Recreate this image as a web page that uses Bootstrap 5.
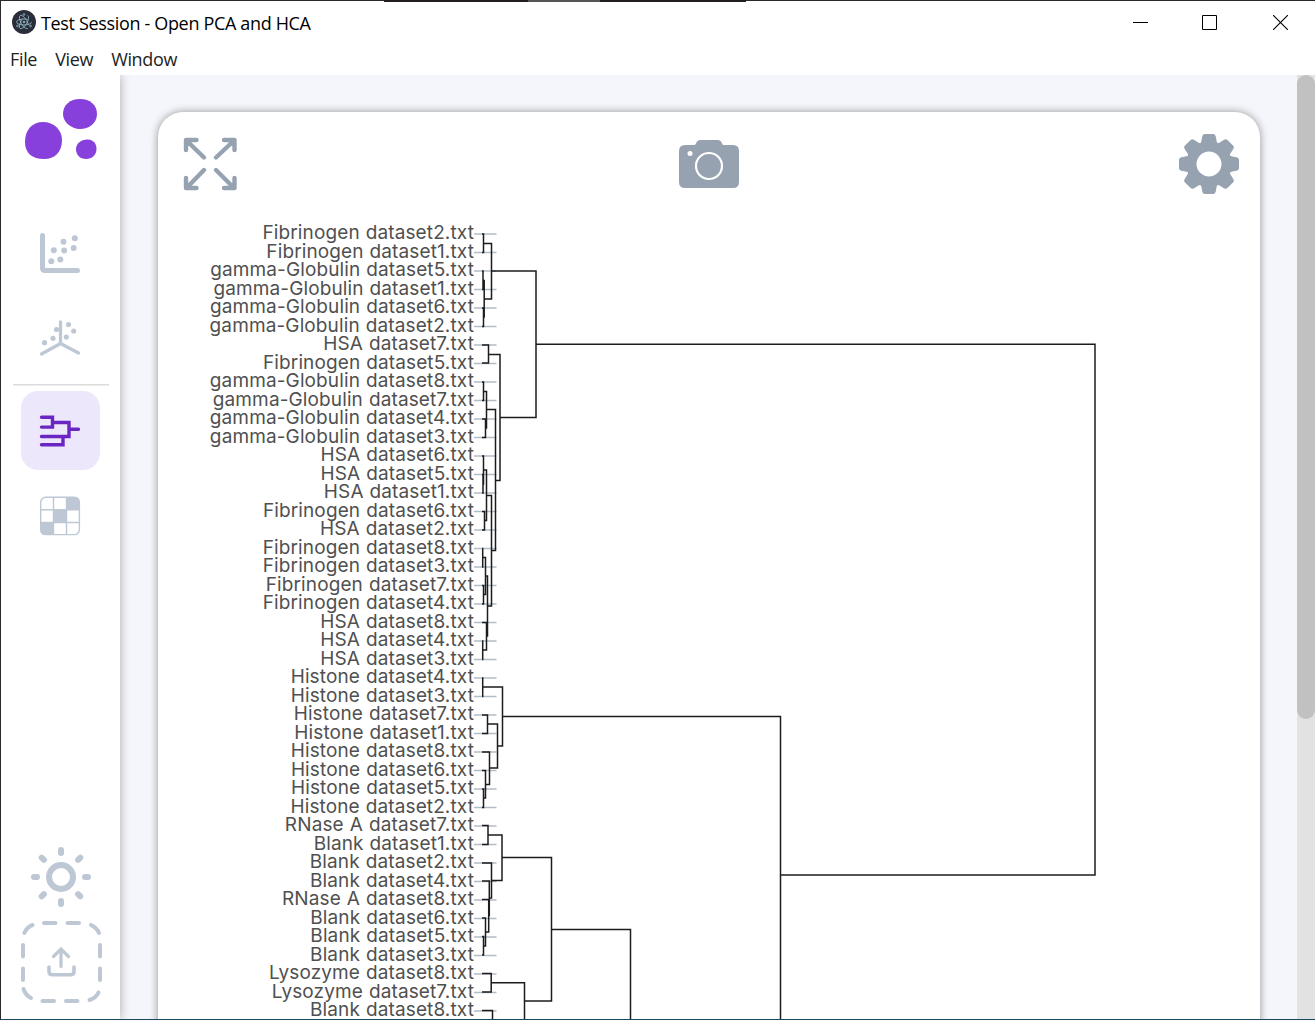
<!DOCTYPE html>
<html lang="en">
<head>
<meta charset="utf-8">
<meta name="viewport" content="width=device-width, initial-scale=1">
<title>Test Session - Open PCA and HCA</title>
<link href="https://cdn.jsdelivr.net/npm/bootstrap@5.3.0/dist/css/bootstrap.min.css" rel="stylesheet">
<style>
html,body{height:100%;overflow:hidden}
.app-window{height:100vh;border-left:1px solid #2b292b;border-top:1px solid #2b292b;border-bottom:1px solid #1d475c;position:relative;background:#fff}
.top-strip{position:absolute;left:383px;top:-1px;width:362px;height:2px;background:linear-gradient(90deg,#231f20 0 144px,#555 144px 216px,#231f20 216px)}
.title-row{height:44px;padding-left:11px}
.title-row>svg{margin-bottom:2px}
.title-text{font:18px/24px "Open Sans",sans-serif;color:#000;letter-spacing:-.34px;margin-left:5px}
.menu-row{height:30px;padding-left:9px;gap:18px;font:18px/28px "Open Sans",sans-serif;color:#222}
.menu-row span{display:inline-block;letter-spacing:-.34px}
.win-controls{gap:54px;margin-right:27px}
.win-controls svg{margin-bottom:2px}
.win-controls svg:last-child{margin-left:2px}
.side-panel{width:119px;z-index:2;background:#fff;box-shadow:0 0 10px rgba(0,0,0,.32);clip-path:inset(0 -20px 0 0);padding-left:12px}
.side-panel svg{display:block}
.tool-active{width:79px;height:79px;border-radius:17px;background:#ede7fb;margin:5px 0 0 8px}
.main-area{background:#f5f6fb;padding:37px 37px 0 38px;overflow:hidden}
.plot-card{height:1100px;background:#fff;border-radius:25px;box-shadow:0 0 8px rgba(0,0,0,.4)}
.plot-tools{height:112px;padding:22px 21px 0 23.5px}
.plot-tools svg:nth-child(2){margin-left:2px}
.label-list{width:316px;font:19px/18.5px Inter,sans-serif;color:#505050;letter-spacing:.12px;word-spacing:.5px;text-align:right}
.label-list li{height:18.5px;white-space:nowrap}
.scroll-track{width:18px;background:#e2e2e2}
.scroll-thumb{height:644px;border-radius:9px;background:#c1c1c1}
</style>
</head>
<body>
<div class="app-window d-flex flex-column">
  <div class="top-strip"></div>
  <header>
    <div class="title-row d-flex align-items-center">
      <svg width="24" height="24" viewBox="0 0 24 24" fill="none" stroke="#9fd0da" stroke-width=".7"><circle cx="12" cy="12" r="12" fill="#2b2e3a" stroke="none"/><ellipse cx="12" cy="12" rx="7.500" ry="3" transform="rotate(60 12 12)" stroke-dasharray="30 6"/><ellipse cx="12" cy="12" rx="7.500" ry="3" transform="rotate(-60 12 12)" stroke-dasharray="28 6"/><ellipse cx="12" cy="12" rx="7.500" ry="3" stroke-dasharray="29 7"/><circle cx="12" cy="12" r=".8" fill="#9fd0da"/><g fill="#2b2e3a"><circle cx="12" cy="4.500" r=".9"/><circle cx="5.500" cy="16" r=".9"/><circle cx="18.500" cy="16" r=".9"/></g></svg>
      <span class="title-text">Test Session - Open PCA and HCA</span>
      <div class="win-controls d-flex align-items-center ms-auto">
        <svg width="15" height="15"><path d="M0 7.500h15" stroke="#000"/></svg>
        <svg width="15" height="15"><path d="M.5.5h14v14h-14z" fill="none" stroke="#000"/></svg>
        <svg width="15" height="15"><path d="M0 0l15 15M15 0L0 15" stroke="#000" stroke-width="1.100"/></svg>
      </div>
    </div>
    <nav class="menu-row d-flex"><span>File</span><span>View</span><span>Window</span></nav>
  </header>
  <div class="d-flex flex-grow-1 overflow-hidden">
    <aside class="side-panel d-flex flex-column flex-shrink-0">
      <svg class="flex-shrink-0" width="96" height="311" viewBox="13 75 96 311">
        <g fill="#8840dc"><path d="M63 114C63 105 70 99 80 99S97 105 97 114S89 129 80 129S63 122 63 114Z"/><path d="M25 142C25 130 32 122 43 122C54 122 62 130 62 140C62 152 55 159 44 159C32 159 25 153 25 142Z"/><path d="M76 149C76 143 82 139 88 139.500C94 140 96.500 144 96.500 149C96.500 155 92 159 86 159C80 159 76 155 76 149Z"/></g>
        <g stroke="#bec8d5" fill="none" stroke-linecap="round" stroke-linejoin="round"><path stroke-width="5" d="M42.500 235.500V268Q42.500 270.500 45 270.500H77.500"/><path stroke-width="3.300" d="M60.500 322V343.500L41.500 354M60.500 343.500L78.500 353"/></g>
        <g fill="#bec8d5"><circle cx="74.800" cy="238.300" r="3"/><circle cx="63.500" cy="241.800" r="3"/><circle cx="73.700" cy="248" r="3"/><circle cx="53.800" cy="250.300" r="3"/><circle cx="64.200" cy="250.500" r="3"/><circle cx="51.300" cy="261.300" r="3"/><circle cx="60.300" cy="259.500" r="3"/><circle cx="68.500" cy="324.500" r="2.600"/><circle cx="56.500" cy="329.500" r="2.600"/><circle cx="73.700" cy="331" r="2.600"/><circle cx="66.300" cy="337" r="2.600"/><circle cx="53" cy="338.300" r="2.600"/><circle cx="44.500" cy="342.700" r="2.600"/></g>
        <path d="M13 384.700h96" stroke="#dcdcdc" stroke-width="1.600"/>
      </svg>
      <button class="tool-active btn p-0 border-0 flex-shrink-0" type="button" aria-label="Dendrogram">
        <svg width="79" height="79" viewBox="21 391 79 79" fill="none" stroke="#6a26c3" stroke-width="3.400" stroke-linecap="round"><path d="M41.500 417.200H52.500V427.100H41.500M52.500 422.500H69V436.500H41.500M69 429.300H78.500M63 436.500V444.700H41.500"/></svg>
      </button>
      <svg class="mt-4" width="96" height="46" viewBox="13 494 96 46"><rect x="40.700" y="497.200" width="38.700" height="37.400" rx="5" fill="#fff" stroke="#bec8d5" stroke-width="1.400"/><g fill="#bec8d5"><path d="M66.500 497H75Q79.500 497 79.500 502V510H66.500ZM53.500 510H66.500V522.500H53.500ZM40.500 522.500H53.500V535H45Q40.500 535 40.500 530Z"/></g><path d="M53.500 497v38M66.500 497v38M40.500 509.700h39M40.500 522.500h39" stroke="#bec8d5" stroke-width="1.400"/></svg>
      <svg class="mt-auto" width="96" height="179" viewBox="13 840 96 179" fill="none" stroke="#bec8d5" stroke-linecap="round">
        <circle cx="61" cy="877" r="12" stroke-width="6"/>
        <path stroke-width="6" d="M61 850v3M61 901v3M34 877h3M85 877h3M41.700 857.700l2.200 2.200M78.100 894.100l2.200 2.200M41.700 896.300l2.200-2.200M78.100 859.900l2.200-2.200"/>
        <path stroke-width="4" d="M44 923H55.500M67.500 923H79M91 925Q97 928 99 933M100 945V956.500M100 968.500V980M98.500 992.500Q96 998 89.500 1000M77.500 1001H66M54 1001H42.500M31 998Q25.500 995 23.500 989M23 980V968.500M23 956.500V945M24.300 933Q27 927 32.500 925"/>
        <path stroke-width="3.600" d="M49 967V971.500Q49 974.700 52.500 974.700H70.500Q74 974.700 74 971.500V967"/><path stroke-width="3.200" d="M61 966.500V949.500M53.500 956.500L61 949L68.500 956.500"/>
      </svg>
    </aside>
    <main class="main-area flex-grow-1">
      <section class="plot-card">
        <div class="plot-tools d-flex justify-content-between align-items-start">
          <svg width="56" height="58" viewBox="182 134 56 58" fill="none" stroke="#97a2b1" stroke-width="4.400" stroke-linecap="round" stroke-linejoin="round"><path d="M204 157.500L186.500 140.500M186 150V140H196.500M216 157.500L234 140.500M224 140H234.500V150M204 170L186.500 188M186 178V188H196.500M216 170L234 188M224 188H234.500V178"/></svg>
          <svg width="60" height="58" viewBox="679 134 60 58"><path fill="#97a2b1" d="M685 145H695L697 141.500Q698 140 700 140H718Q720 140 721 141.500L723 145H733Q739 145 739 151V182Q739 188 733 188H685Q679 188 679 182V151Q679 145 685 145Z"/><circle cx="709" cy="166" r="13" fill="none" stroke="#fff" stroke-width="2.200"/><circle cx="690" cy="153.500" r="2.500" fill="#fff"/></svg>
          <svg width="60" height="60" viewBox="-30 -30 60 60" fill="#97a2b1"><circle r="17.500" fill="none" stroke="#97a2b1" stroke-width="10"/><defs><path id="tooth" d="M-9-20Q-7.500-22-7-26Q-6.700-30-4-30H4Q6.700-30 7-26Q7.500-22 9-20Z"/></defs><use href="#tooth"/><use href="#tooth" transform="rotate(45)"/><use href="#tooth" transform="rotate(90)"/><use href="#tooth" transform="rotate(135)"/><use href="#tooth" transform="rotate(180)"/><use href="#tooth" transform="rotate(225)"/><use href="#tooth" transform="rotate(270)"/><use href="#tooth" transform="rotate(315)"/></svg>
        </div>
        <div class="d-flex">
          <ul class="label-list list-unstyled mb-0 flex-shrink-0">
            <li>Fibrinogen dataset2.txt</li><li>Fibrinogen dataset1.txt</li><li>gamma-Globulin dataset5.txt</li><li>gamma-Globulin dataset1.txt</li><li>gamma-Globulin dataset6.txt</li><li>gamma-Globulin dataset2.txt</li>
            <li>HSA dataset7.txt</li><li>Fibrinogen dataset5.txt</li><li>gamma-Globulin dataset8.txt</li><li>gamma-Globulin dataset7.txt</li><li>gamma-Globulin dataset4.txt</li><li>gamma-Globulin dataset3.txt</li>
            <li>HSA dataset6.txt</li><li>HSA dataset5.txt</li><li>HSA dataset1.txt</li><li>Fibrinogen dataset6.txt</li><li>HSA dataset2.txt</li><li>Fibrinogen dataset8.txt</li>
            <li>Fibrinogen dataset3.txt</li><li>Fibrinogen dataset7.txt</li><li>Fibrinogen dataset4.txt</li><li>HSA dataset8.txt</li><li>HSA dataset4.txt</li><li>HSA dataset3.txt</li>
            <li>Histone dataset4.txt</li><li>Histone dataset3.txt</li><li>Histone dataset7.txt</li><li>Histone dataset1.txt</li><li>Histone dataset8.txt</li><li>Histone dataset6.txt</li><li>Histone dataset5.txt</li><li>Histone dataset2.txt</li>
            <li>RNase A dataset7.txt</li><li>Blank dataset1.txt</li><li>Blank dataset2.txt</li><li>Blank dataset4.txt</li><li>RNase A dataset8.txt</li><li>Blank dataset6.txt</li><li>Blank dataset5.txt</li><li>Blank dataset3.txt</li>
            <li>Lysozyme dataset8.txt</li><li>Lysozyme dataset7.txt</li><li>Blank dataset8.txt</li>
          </ul>
          <svg class="flex-shrink-0" width="780" height="796" viewBox="474 224 780 796" fill="none">
            <path id="ticks" stroke="#b4bcc4" stroke-width="1.300"/>
            <path stroke="#1c1c1c" stroke-width="1.500" d="M482 234H483.500V252.500H482M483.500 243.500H491.500V299H484
              M482 271H483V289.500H482M483 280.500H484.200V317H483.500M482 308H483.500V326.500H482M491.500 271H536V417.500H500M536 344.300H1095V875H780.500
              M482 345H488.500V363H482M488.500 354.500H500V480.500H495.500M482 382H483.500V400.500H482M483.500 391.500H486.500V428H485.500M482 419H485.500V437.500H482M486.500 409.500H495.500V550.500H491.500
              M482 456H483.500V484H483M482 474.500H483V493H482M483.500 470H486.500V520.500H484.500M482 511.500H484.500V530H482M486.500 495.500H491.500V606H487.500
              M482 548.500H482.700V567H482M482.700 557.500H485.500V594.500H483.500M482 585.500H483.500V604H482M485.500 576H487.500V636H486.500
              M482 622.500H486.500V650H482.700M482 641H482.700V659.500H482
              M482 678H482.700V696.500H482M482.700 687H502.500V746H497.500M482 715H487.500V733.500H482M487.500 724H497.500V768H489.500M482 752H489.500V784.500H485.500M482 770.500H485.500V798H483.500M482 789H483.500V807.500H482M502.500 716.500H780.500V1022
              M482 825.500H488V844.500H482M488 835H502V880.500H491.500M482 863H491.500V898H489.500M482 881H489.300V915.500H488.500M482 899.500H488.700V932H485.500M482 918H485.500V946H483.500M482 936.500H483.500V955H482M502 857.500H551.500V1001H524.500M551.500 929.500H630.500V1022
              M482 973.500H491.200V992H482M491.200 982.700H524.500V1022M482 1010.500H492.500V1022"/>
          </svg>
        </div>
      </section>
    </main>
    <div class="scroll-track flex-shrink-0"><div class="scroll-thumb"></div></div>
  </div>
</div>
<script src="https://cdn.jsdelivr.net/npm/bootstrap@5.3.0/dist/js/bootstrap.bundle.min.js"></script>
<script>
document.getElementById('ticks').setAttribute('d', Array.from(document.querySelectorAll('.label-list li'), (row, i) => `M474 ${234 + i * 18.5}H496.500`).join(''));
</script>
</body>
</html>
